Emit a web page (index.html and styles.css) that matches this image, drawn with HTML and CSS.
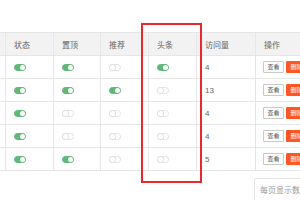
FILE: index.html
```html
<!DOCTYPE html>
<html>
<head lang="zh">
    <meta charset="UTF-8">
    <title>文章列表</title>
    <link rel="stylesheet" href="styles.css">
</head>
<body>
<div class="page">
    <table class="grid">
        <colgroup>
            <col class="c0">
            <col class="c1">
            <col class="c2">
            <col class="c3">
            <col class="c4">
            <col class="c5">
            <col class="c6">
        </colgroup>
        <thead>
        <tr>
            <th></th>
            <th>状态</th>
            <th>置顶</th>
            <th>推荐</th>
            <th>头条</th>
            <th>访问量</th>
            <th>操作</th>
        </tr>
        </thead>
        <tbody>
        <tr>
            <td></td>
            <td><span class="sw on"></span></td>
            <td><span class="sw on"></span></td>
            <td><span class="sw"></span></td>
            <td><span class="sw on"></span></td>
            <td>4</td>
            <td><span class="btn">查看</span><span class="btn del">删除</span></td>
        </tr>
        <tr>
            <td></td>
            <td><span class="sw on"></span></td>
            <td><span class="sw on"></span></td>
            <td><span class="sw on"></span></td>
            <td><span class="sw"></span></td>
            <td>13</td>
            <td><span class="btn">查看</span><span class="btn del">删除</span></td>
        </tr>
        <tr>
            <td></td>
            <td><span class="sw on"></span></td>
            <td><span class="sw"></span></td>
            <td><span class="sw"></span></td>
            <td><span class="sw"></span></td>
            <td>4</td>
            <td><span class="btn">查看</span><span class="btn del">删除</span></td>
        </tr>
        <tr>
            <td></td>
            <td><span class="sw on"></span></td>
            <td><span class="sw"></span></td>
            <td><span class="sw"></span></td>
            <td><span class="sw"></span></td>
            <td>4</td>
            <td><span class="btn">查看</span><span class="btn del">删除</span></td>
        </tr>
        <tr>
            <td></td>
            <td><span class="sw on"></span></td>
            <td><span class="sw on"></span></td>
            <td><span class="sw"></span></td>
            <td><span class="sw"></span></td>
            <td>5</td>
            <td><span class="btn">查看</span><span class="btn del">删除</span></td>
        </tr>
        </tbody>
    </table>
    <div class="pager">
        <div class="limit">每页显示数据</div>
    </div>
    <div class="mark"></div>
</div>
</body>
</html>
```

FILE: styles.css
```css
body, div, table, th, td {
    margin: 0;
    padding: 0;
}

body {
    width: 300px;
    height: 200px;
    overflow: hidden;
    background: #fff;
    font-family: "Liberation Sans", "Noto Sans CJK SC", sans-serif;
    font-size: 8px;
    color: #666;
}

.page {
    position: relative;
    height: 200px;
    padding-top: 32px;
    box-sizing: border-box;
}

.grid {
    border-collapse: collapse;
    table-layout: fixed;
    width: 340px;
    margin-left: -1px;
}

.grid .c0 { width: 6px; }
.grid .c1 { width: 48px; }
.grid .c2 { width: 47px; }
.grid .c3 { width: 48px; }
.grid .c4 { width: 48px; }
.grid .c5 { width: 59px; }
.grid .c6 { width: 84px; }

.grid th,
.grid td {
    height: 22px;
    padding: 0 0 0 8px;
    border: 1px solid #e6e6e6;
    text-align: left;
    font-weight: normal;
    white-space: nowrap;
    overflow: hidden;
}

.grid th:first-child,
.grid td:first-child {
    padding: 0;
}

.grid thead th {
    background: #f2f2f2;
    color: #666;
}

.sw {
    position: relative;
    display: inline-block;
    width: 10px;
    height: 5px;
    border: 1px solid #e2e2e2;
    border-radius: 4px;
    vertical-align: middle;
    background: #fff;
}

.sw:after {
    content: "";
    position: absolute;
    top: 0;
    left: 0;
    width: 5px;
    height: 5px;
    border-radius: 50%;
    box-shadow: 0 0 0 1px #e2e2e2;
    background: #fff;
}

.sw.on {
    border-color: #5fb878;
    background: #5fb878;
}

.sw.on:after {
    left: 5px;
    box-shadow: none;
}

.btn {
    display: inline-block;
    width: 19px;
    height: 10px;
    line-height: 10px;
    border: 1px solid #c9c9c9;
    border-radius: 1px;
    text-align: center;
    font-size: 6px;
    color: #555;
    background: #fff;
    vertical-align: middle;
    margin-left: -1px;
}

.btn.del {
    margin-left: 2px;
    border-color: #ff5722;
    background: #ff5722;
    color: #fff;
}

.pager {
    margin: 7px 0 0 254px;
    height: 30px;
    border: 1px solid #e6e6e6;
    border-right: none;
    border-radius: 2px 0 0 0;
}

.limit {
    padding: 5px 0 0 5px;
    color: #999;
    white-space: nowrap;
}

.mark {
    position: absolute;
    top: 23px;
    left: 141px;
    width: 57px;
    height: 156px;
    border: 2px solid #e8282a;
}
```
